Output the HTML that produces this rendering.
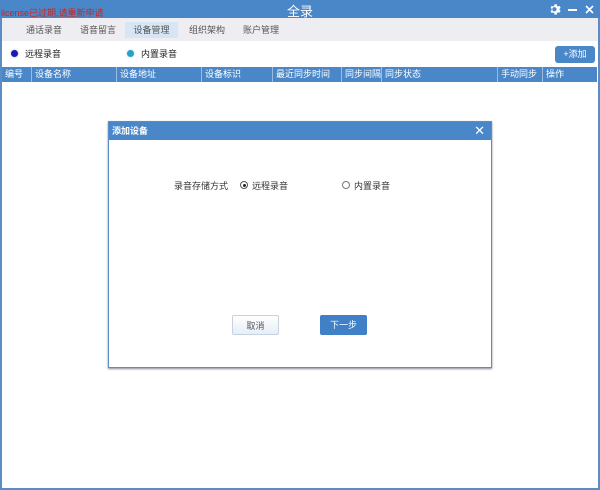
<!DOCTYPE html>
<html><head><meta charset="utf-8"><style>
*{margin:0;padding:0;box-sizing:border-box}
body{width:600px;height:490px;overflow:hidden;font-family:"Liberation Sans","Noto Sans CJK SC",sans-serif;font-size:9px;color:#333;background:#fff;position:relative}
.win{position:absolute;left:0;top:0;width:600px;height:490px;border:2px solid #5b8cc4;border-top:none}
.title{position:absolute;left:0;top:0;width:600px;height:18px;background:#4a87c9}
.title .t{position:absolute;left:0;right:0;top:1px;text-align:center;color:#fff;font-size:13px}
.lic{position:absolute;left:1px;top:8px;color:#d0231b;font-size:9px;line-height:10px}
.tabs{position:absolute;left:2px;top:18px;width:596px;height:23px;background:#eeedf1}
.tab{position:absolute;top:4px;height:16px;line-height:16px;color:#555;font-size:9px;text-align:center}
.tab.act{background:#d6e6f5}
.radio{position:absolute;top:47px;font-size:9px;color:#222}
.dot{position:absolute;top:50px;width:7px;height:7px;border-radius:50%}
.add{position:absolute;left:555px;top:46px;width:40px;height:17px;background:#4a87c9;color:#fff;border-radius:3px;text-align:center;line-height:17px;font-size:9px}
.th{position:absolute;left:2px;top:67px;width:595px;height:15px;background:#4a87c9}
.th span{position:absolute;top:0;line-height:15px;color:#fff;font-size:9px;padding-left:3px;border-left:1px solid #9bbbe0;height:15px}
.dlg{position:absolute;left:108px;top:121px;width:384px;height:247px;border:1px solid #5b8cc4;background:#fff;box-shadow:0 1px 2px #889}
.dh{height:18px;background:#4a87c9;color:#fff;font-size:9px;line-height:18px;padding-left:3px;font-weight:bold}
.dx{position:absolute;right:6px;top:1px;color:#fff;font-size:13px;line-height:16px}
.btn{position:absolute;top:193px;width:47px;height:20px;border-radius:2px;text-align:center;line-height:20px;font-size:9px}
</style></head><body>
<div class="win"></div>
<div class="title"><div class="t">全录</div><div class="lic">license已过期,请重新申请</div>
<svg style="position:absolute;left:549px;top:3px" width="13" height="13" viewBox="0 0 24 24"><path fill="#fff" d="M12 8a4 4 0 100 8 4 4 0 000-8zm9.4 5.5l2.1 1.6-2 3.5-2.5-1a8 8 0 01-2.4 1.4L16.2 22h-4l-.4-2.6a8 8 0 01-2.4-1.4l-2.5 1-2-3.5 2.1-1.6a8 8 0 010-2.9L4.9 9.4l2-3.5 2.5 1a8 8 0 012.4-1.4L12.2 2.9h4l.4 2.6a8 8 0 012.4 1.4l2.5-1 2 3.5-2.1 1.6a8 8 0 010 3z" transform="translate(-2 -.5)"/></svg>
<div style="position:absolute;left:568px;top:9px;width:9px;height:2px;background:#fff"></div>
<svg style="position:absolute;left:585px;top:5px" width="9" height="9"><path d="M1 1L8 8M8 1L1 8" stroke="#fff" stroke-width="1.6"/></svg>
</div>
<div class="tabs">
<div class="tab" style="left:18px;width:48px">通话录音</div>
<div class="tab" style="left:72px;width:48px">语音留言</div>
<div class="tab act" style="left:123px;width:53px">设备管理</div>
<div class="tab" style="left:181px;width:48px">组织架构</div>
<div class="tab" style="left:235px;width:48px">账户管理</div>
</div>
<div class="dot" style="left:11px;background:#1a1ab0;box-shadow:0 0 2px #99f"></div>
<div class="radio" style="left:25px">远程录音</div>
<div class="dot" style="left:127px;background:#2aa0c8;box-shadow:0 0 2px #9cf"></div>
<div class="radio" style="left:141px">内置录音</div>
<div class="add">+添加</div>
<div class="th">
<span style="left:0;border:none">编号</span>
<span style="left:29px">设备名称</span>
<span style="left:114px">设备地址</span>
<span style="left:199px">设备标识</span>
<span style="left:270px">最近同步时间</span>
<span style="left:339px">同步间隔</span>
<span style="left:379px">同步状态</span>
<span style="left:495px">手动同步</span>
<span style="left:540px">操作</span>
</div>
<div class="dlg">
<div class="dh">添加设备</div><div class="dx">✕</div>
<div style="position:absolute;left:65px;top:57px;font-size:9px;color:#333">录音存储方式</div>
<div style="position:absolute;left:131px;top:59px;width:8px;height:8px;border:1px solid #555;border-radius:50%"><div style="margin:1.5px;width:3px;height:3px;border-radius:50%;background:#222"></div></div>
<div style="position:absolute;left:143px;top:57px">远程录音</div>
<div style="position:absolute;left:233px;top:59px;width:8px;height:8px;border:1px solid #777;border-radius:50%"></div>
<div style="position:absolute;left:245px;top:57px">内置录音</div>
<div class="btn" style="left:123px;border:1px solid #c5d3e0;background:linear-gradient(#fff,#e6eef6);color:#555">取消</div>
<div class="btn" style="left:211px;background:#3f80c6;color:#fff">下一步</div>
</div>
</body></html>
